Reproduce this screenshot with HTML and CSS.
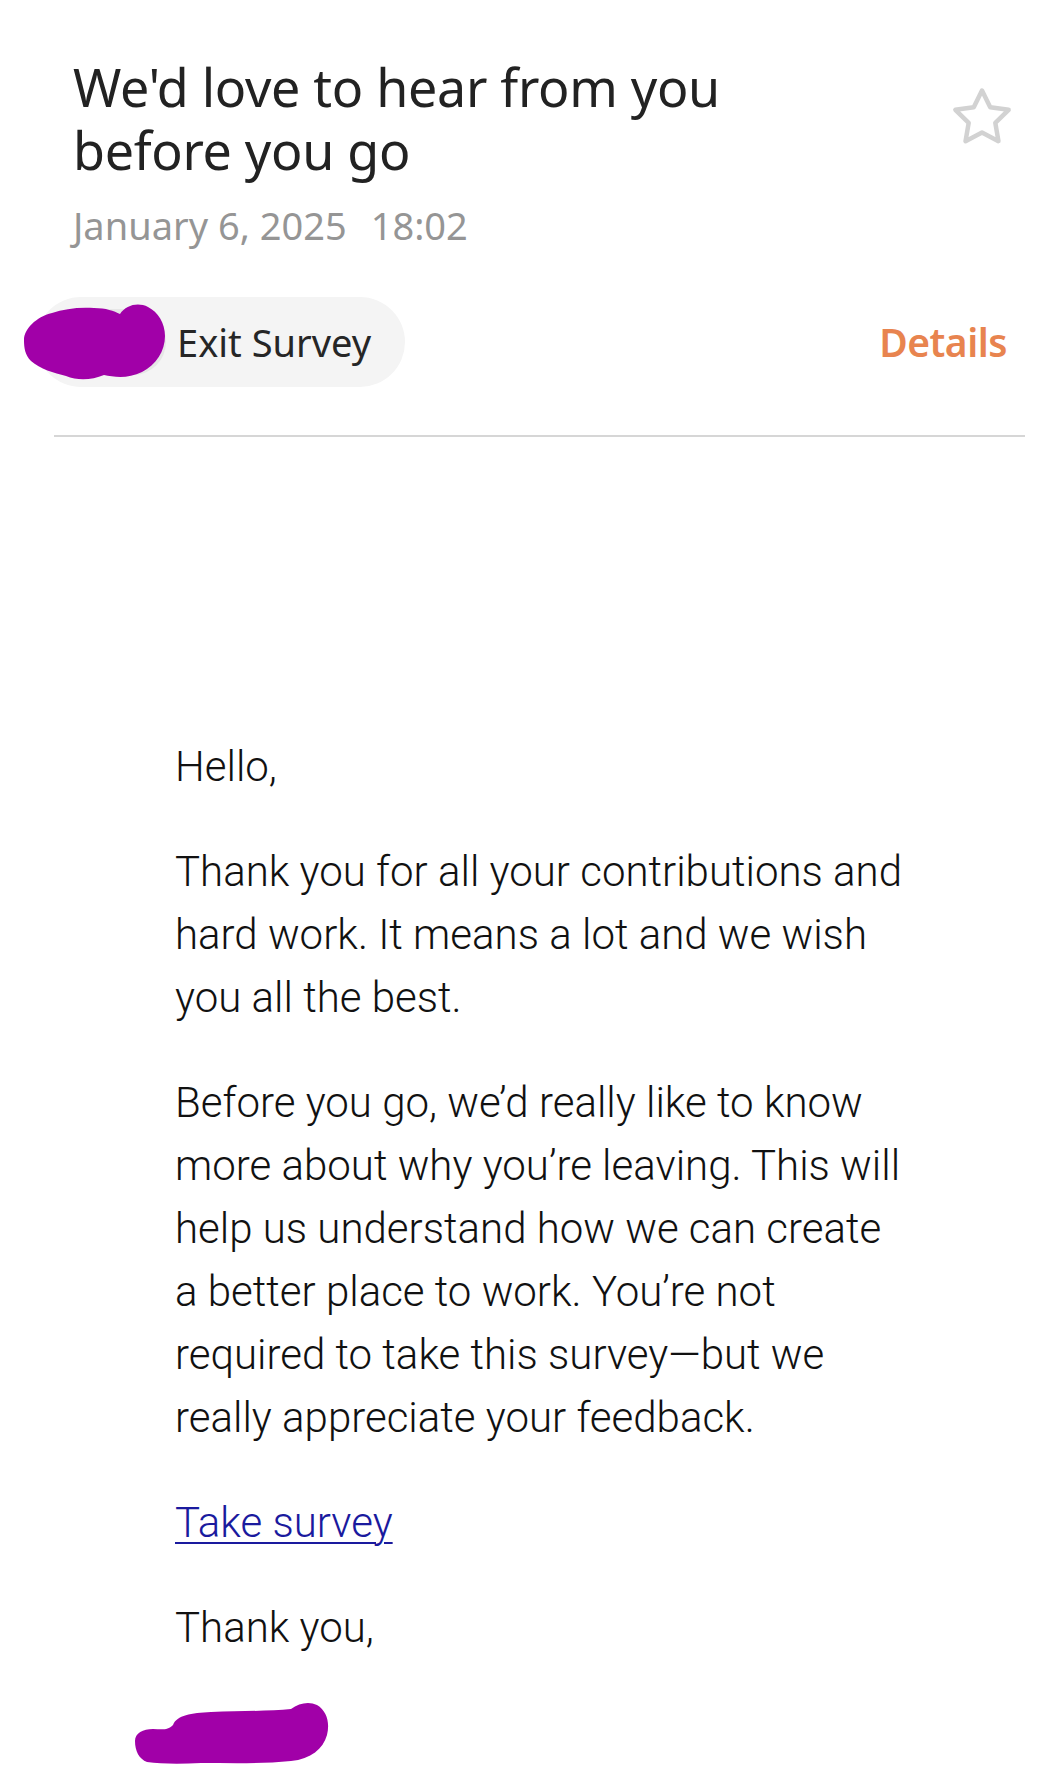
FILE: index.html
```html
<!DOCTYPE html>
<html lang="en">
<head>
<meta charset="utf-8">
<title>We'd love to hear from you before you go</title>
<link rel="stylesheet" href="styles.css">
</head>
<body>
<div class="page">
  <header class="head">
    <div class="head-text">
      <h1 class="subject">We'd love to hear from you before you go</h1>
      <div class="date">January 6, 2025<span class="time">18:02</span></div>
    </div>
    <button class="star" aria-label="Star">
      <svg width="60" height="58" viewBox="0 0 60 58" aria-hidden="true">
        <polygon points="30,2.5 38.23,19.17 56.63,21.85 43.31,34.83 46.46,53.15 30,44.5 13.54,53.15 16.69,34.83 3.37,21.85 21.77,19.17" fill="none" stroke="#d2d2d2" stroke-width="4.5" stroke-linejoin="round"/>
      </svg>
    </button>
  </header>

  <div class="sender-row">
    <div class="chip">
      <span class="avatar"></span>
      <svg class="scribble scribble-avatar" width="146" height="80" viewBox="0 0 146 80" aria-hidden="true">
        <path d="M2 37 C2 26 14 14 30 10 C42 6 56 4 72 5 C84 5 92 8 98 11 C104 2 116 -1 126 4 C136 9 143 20 143 33 C143 48 134 62 120 69 C106 76 92 74 82 72 C70 77 56 78 44 73 C32 70 18 66 9 58 C3 52 2 45 2 37 Z" fill="#a100a8"/>
      </svg>
      <span class="chip-name">Exit Survey</span>
    </div>
    <a class="details" href="#">Details</a>
  </div>

  <hr class="divider">

  <main class="mail-body">
    <p>Hello,</p>
    <p>Thank you for all your contributions and hard work. It means a lot and we wish you all the best.</p>
    <p>Before you go, we’d really like to know more about why you’re leaving. This will help us understand how we can create a better place to work. You’re not required to take this survey—but we really appreciate your feedback.</p>
    <p><a class="survey-link" href="#">Take survey</a></p>
    <p>Thank you,</p>
    <div class="signature">
      <svg class="scribble" width="200" height="64" viewBox="0 0 200 64" aria-hidden="true">
        <path d="M4 40 C4 32 12 28 22 28 C30 28 36 30 42 24 C46 14 60 12 80 11 C110 10 140 10 160 8 C168 2 178 0 186 4 C196 10 199 22 196 34 C192 48 180 58 160 60 C130 63 100 62 70 62 C50 63 30 63 16 61 C8 58 4 50 4 40 Z" fill="#a100a8"/>
      </svg>
    </div>
  </main>
</div>
</body>
</html>
```

FILE: styles.css
```css
* {
  box-sizing: border-box;
}

html, body {
  margin: 0;
  padding: 0;
  background: #ffffff;
}

.page {
  width: 1046px;
  min-height: 1768px;
  overflow: hidden;
}

/* Header */
.head {
  display: flex;
  align-items: flex-start;
  justify-content: space-between;
  padding: 55px 34px 0 73px;
}

.subject {
  margin: 0;
  max-width: 680px;
  font-family: "Noto Sans", "Open Sans", sans-serif;
  font-weight: 400;
  font-size: 52px;
  line-height: 63px;
  color: #222222;
  letter-spacing: -0.3px;
}

.date {
  margin-top: 18px;
  font-family: "Noto Sans", "Open Sans", sans-serif;
  font-size: 38px;
  line-height: 52px;
  color: #959595;
}

.time {
  margin-left: 24px;
}

.star {
  margin: 33px 0 0 0;
  padding: 0;
  border: 0;
  background: none;
  width: 60px;
  height: 58px;
  display: block;
}

.star svg {
  display: block;
  overflow: visible;
}

/* Sender row */
.sender-row {
  display: flex;
  align-items: center;
  justify-content: space-between;
  margin-top: 46px;
  padding: 0 39px 0 36px;
}

.chip {
  position: relative;
  display: flex;
  align-items: center;
  height: 90px;
  padding: 0 34px 0 12px;
  border-radius: 45px;
  background: #f4f4f4;
}

.avatar {
  width: 118px;
  height: 66px;
  border-radius: 33px;
  background: #e6e6e6;
  margin-right: 11px;
}

.scribble-avatar {
  position: absolute;
  left: -14px;
  top: 6px;
}

.chip-name {
  font-family: "Noto Sans", "Open Sans", sans-serif;
  font-size: 38px;
  line-height: 50px;
  color: #262626;
}

.details {
  font-family: "Noto Sans", "Open Sans", sans-serif;
  font-weight: 600;
  font-size: 39px;
  line-height: 50px;
  color: #e8844f;
  text-decoration: none;
  letter-spacing: -0.5px;
}

.divider {
  margin: 48px 21px 0 54px;
  height: 2px;
  border: 0;
  background: #d6d6d6;
}

/* Body */
.mail-body {
  padding: 298px 0 0 175px;
  font-family: Roboto, "Liberation Sans", sans-serif;
  font-weight: 300;
  font-size: 42px;
  line-height: 63px;
  color: #111111;
}

.mail-body p {
  margin: 0 0 42px 0;
  max-width: 736px;
}

.survey-link {
  color: #1a1a9e;
  text-decoration: underline;
  text-decoration-thickness: 2px;
  text-underline-offset: 5px;
}

.signature {
  margin-left: -44px;
  margin-top: 16px;
}

.signature svg {
  display: block;
}
```
